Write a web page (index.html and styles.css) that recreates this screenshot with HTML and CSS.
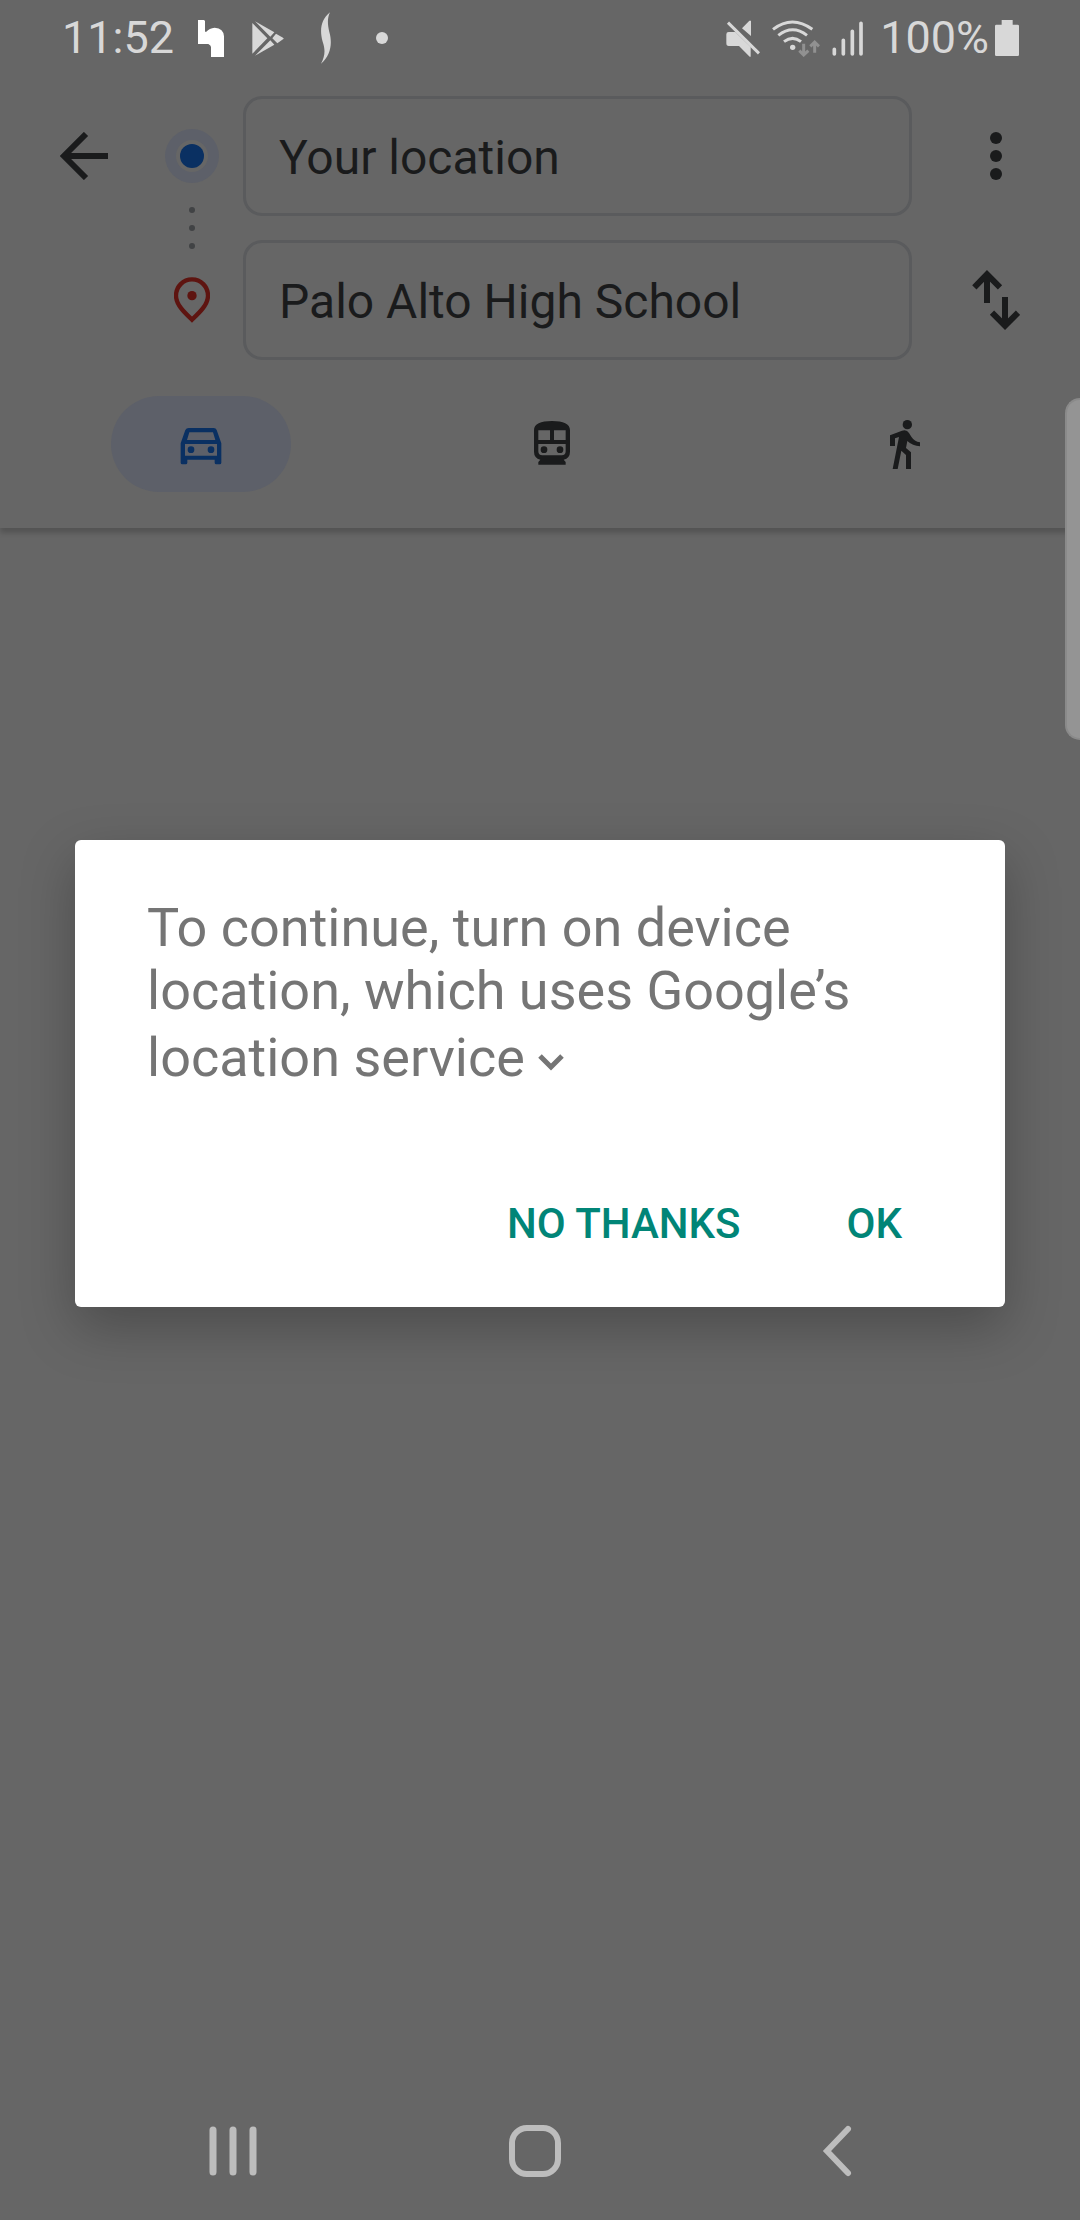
FILE: index.html
```html
<!DOCTYPE html>
<html lang="en">
<head>
<meta charset="utf-8">
<meta name="viewport" content="width=device-width, initial-scale=1">
<title>Directions</title>
<link rel="stylesheet" href="styles.css">
</head>
<body>
<div class="screen">
  <div class="status">
    <time class="status-text">11:52</time>
    <div class="notices">
      <svg width="26" height="37" viewBox="471 57 78 111" aria-hidden="true"><path fill="#fff" d="M471 57h18l3 3v32h4q9-11 25-12 27 2 28 26v62h-39v-30q0-5-8-9h-31z"/></svg>
      <svg width="32" height="35" viewBox="634 59 96 105" aria-hidden="true"><path fill="currentColor" d="M635 65l45 46-45 46zM643 60l58 33-12 13zM643 163l46-46 12 13zM706 97l21 12q4 3 0 5l-17 12-15-15z"/></svg>
      <svg class="notice-wave" width="12" height="52" viewBox="838 32 36 156" aria-hidden="true"><path fill="currentColor" d="M868 33c-9 19-7 37-2 59 10 35 4 69-25 95 13-25 13-43 5-66-10-34-5-67 22-88z"/></svg>
      <svg width="12" height="12" viewBox="0 0 12 12" aria-hidden="true"><circle cx="6" cy="6" r="6" fill="currentColor"/></svg>
    </div>
    <div class="system">
      <svg width="34" height="37" viewBox="78 55 102 111" aria-hidden="true"><path fill="currentColor" d="M86 91h20l46 45v29h-3l-32-32H86q-7 0-7-8V98q0-7 7-7zM126 80l22-23h5v46z"/><path d="M84 63l93 92" stroke="currentColor" stroke-width="9"/></svg>
      <svg width="48" height="37" viewBox="219 55 144 111" aria-hidden="true"><g fill="none" stroke="currentColor" stroke-width="9"><path d="M222 83q58-44 118 0M238 101q43-33 86 0M255 120q26-20 51 0"/></g><circle cx="281" cy="137" r="8" fill="currentColor"/><g fill="none" stroke="#919191" stroke-width="9"><path d="M314 126v34M301 147l13 13 14-13M347 153v-32M334 134l13-13 13 13"/></g></svg>
      <svg width="32" height="35" viewBox="400 61 96 105" aria-hidden="true"><path d="M407 146v14M434 119v41M461 92v68M487 68v92" stroke="currentColor" stroke-width="11" stroke-linecap="round"/></svg>
      <span class="status-text battery-level">100%</span>
      <svg width="24" height="36" viewBox="882 57 72 108" aria-hidden="true"><path fill="currentColor" d="M902 57h33v14h15q4 0 4 4v86q0 4-4 4h-64q-4 0-4-4V75q0-4 4-4h16z"/></svg>
    </div>
  </div>

  <header class="planner">
    <div class="route">
      <button class="icon-button back" aria-label="Back"><svg width="48" height="48" viewBox="0 0 48 48"><path d="M48 24H4M26 2L4 24l22 22" fill="none" stroke="currentColor" stroke-width="6"/></svg></button>
      <svg class="origin" width="54" height="54" viewBox="0 0 54 54" aria-hidden="true"><circle cx="27" cy="27" r="27" fill="#5d6069"/><circle cx="27" cy="27" r="16" fill="#666"/><circle cx="27" cy="27" r="12" fill="#0a3062"/></svg>
      <input class="place place-from" type="text" value="Your location" aria-label="Starting point">
      <button class="icon-button more" aria-label="More options"><svg width="12" height="48" viewBox="0 0 12 48" fill="currentColor"><circle cx="6" cy="6" r="6"/><circle cx="6" cy="24" r="6"/><circle cx="6" cy="42" r="6"/></svg></button>
      <svg class="between" width="6" height="42" viewBox="0 0 6 42" fill="#414345" aria-hidden="true"><circle cx="3" cy="3" r="3"/><circle cx="3" cy="21" r="3"/><circle cx="3" cy="39" r="3"/></svg>
      <svg class="pin" width="36" height="46" viewBox="402 591 108 138" aria-hidden="true"><path d="M456 719c-20-19-48-44-48-72a48 49 0 0 1 96 0c0 28-28 53-48 72z" fill="none" stroke="#5e1410" stroke-width="13"/><circle cx="456" cy="647" r="14" fill="#5e1410"/></svg>
      <input class="place place-to" type="text" value="Palo Alto High School" aria-label="Destination">
      <button class="icon-button swap" aria-label="Swap start and destination"><svg width="48" height="60" viewBox="336 570 144 180"><path d="M381 669v-87M343 622l38-39 39 39M435 651v88M396 698l39 39 39-39" fill="none" stroke="currentColor" stroke-width="18"/></svg></button>
    </div>
    <nav class="modes" aria-label="Travel mode">
      <button class="mode mode-active" aria-label="Driving" aria-pressed="true"><svg width="54" height="54" viewBox="252 111 162 162"><path fill="currentColor" fill-rule="evenodd" d="M296 144h75q7 0 9 6l14 40v58q0 5-5 5h-10q-5 0-5-5v-9h-82v9q0 5-5 5h-10q-5 0-5-5v-58l14-40q3-6 10-6zM298 157l-7 23h85l-7-23zM285 192v35h96v-35z"/><g fill="currentColor"><circle cx="303" cy="209" r="10"/><circle cx="363" cy="209" r="10"/></g></svg></button>
      <button class="mode" aria-label="Transit" aria-pressed="false"><svg width="54" height="54" viewBox="1305 111 162 162"><path fill="currentColor" fill-rule="evenodd" d="M1386 123c34 0 54 8 54 28v64q0 19-19 24l6 7v8h-82v-8l6-7q-19-5-19-24v-64c0-20 20-28 54-28zM1345 151v29h35v-29zM1392 151v29h35v-29zM1345 192v22q0 12 12 12h58q12 0 12-12v-22z"/><g fill="currentColor"><circle cx="1362" cy="209" r="10"/><circle cx="1410" cy="209" r="10"/></g></svg></button>
      <button class="mode" aria-label="Walking" aria-pressed="false"><svg width="54" height="54" viewBox="108 111 162 162"><g fill="currentColor"><circle cx="202" cy="134" r="14"/><path d="M150 166l36-14q14-5 21 7l7 11q9 14 26 17v12q-22-1-38-16l-4 21 15 13v50h-15v-42l-14-13-11 55h-15l19-96-12 4v23h-15z"/></g></svg></button>
    </nav>
  </header>

  <main class="map"></main>

  <nav class="system-nav" aria-label="System">
    <button class="nav-button" aria-label="Recent apps"><svg width="54" height="54" viewBox="0 0 54 54"><path d="M7 6v42M27 6v42M47 6v42" stroke="currentColor" stroke-width="7" stroke-linecap="round"/></svg></button>
    <button class="nav-button" aria-label="Home"><svg width="54" height="54" viewBox="0 0 54 54"><rect x="4" y="4" width="46" height="46" rx="15" fill="none" stroke="currentColor" stroke-width="6"/></svg></button>
    <button class="nav-button" aria-label="Back"><svg width="54" height="54" viewBox="0 0 54 54"><path d="M38 5L17 27l21 22" fill="none" stroke="currentColor" stroke-width="6" stroke-linecap="round"/></svg></button>
  </nav>

  <div class="edge-handle"></div>

  <div class="overlay">
    <section class="dialog" role="dialog" aria-modal="true" aria-labelledby="dialog-message">
      <p class="message" id="dialog-message">To continue, turn on device location, which uses Google’s location service <svg class="chevron" width="36" height="54" viewBox="0 0 36 54" aria-hidden="true"><path d="M7 34l11 11 11-11" fill="none" stroke="currentColor" stroke-width="5"/></svg></p>
      <div class="actions">
        <button class="action">NO THANKS</button>
        <button class="action">OK</button>
      </div>
    </section>
  </div>
</div>
</body>
</html>
```
FILE: styles.css
```css
* {
  box-sizing: border-box;
}

body {
  margin: 0;
  background: #666;
  color: #1a1b1c;
  font-family: Roboto, "Liberation Sans", sans-serif;
}

button {
  margin: 0;
  padding: 0;
  border: 0;
  background: none;
  color: inherit;
  font: inherit;
}

svg {
  display: block;
  flex: none;
}

.screen {
  position: relative;
  display: flex;
  flex-direction: column;
  min-height: 100vh;
}

/* Status bar */
.status {
  display: flex;
  align-items: center;
  height: 74px;
  padding: 2px 61px 0 62px;
  color: #d8d8d8;
}

.status-text {
  font-size: 45px;
  line-height: 54px;
}

.notices {
  display: flex;
  align-items: center;
  gap: 28px;
  padding-left: 24px;
}

.notice-wave {
  margin: 0 16px 0 8px;
}

.system {
  display: flex;
  align-items: center;
  gap: 12px;
  margin-left: auto;
}

.battery-level {
  margin: 0 -6px 0 4px;
}

/* Route planner */
.planner {
  padding: 22px 0 36px;
  box-shadow: 0 5px 5px rgba(0, 0, 0, 0.18);
}

.route {
  display: grid;
  grid-template-columns: 81px 102px 1fr 108px;
  grid-template-rows: 120px 120px;
  row-gap: 24px;
  align-items: center;
  padding: 0 60px;
}

.icon-button {
  display: flex;
  justify-content: center;
  width: 48px;
}

.back {
  grid-area: 1 / 1;
}

.origin {
  grid-area: 1 / 2;
  justify-self: center;
}

.between {
  grid-area: 1 / 2 / 3 / 3;
  justify-self: center;
}

.pin {
  grid-area: 2 / 2;
  justify-self: center;
}

.place {
  width: 100%;
  height: 120px;
  padding: 2px 33px 0;
  border: 3px solid #5a5b5d;
  border-radius: 19px;
  background: none;
  color: inherit;
  font: 48px Roboto, "Liberation Sans", sans-serif;
}

.place-from {
  grid-area: 1 / 3;
}

.place-to {
  grid-area: 2 / 3;
}

.more {
  grid-area: 1 / 4;
  justify-self: end;
}

.swap {
  grid-area: 2 / 4;
  justify-self: end;
}

.modes {
  display: flex;
  justify-content: space-between;
  margin-top: 36px;
  padding: 0 87px 0 111px;
}

.mode {
  display: flex;
  align-items: center;
  justify-content: center;
  width: 180px;
  height: 96px;
  border-radius: 48px;
}

.mode-active {
  background: #5d6069;
  color: #0a3062;
}

.map {
  flex: 1;
}

/* System navigation */
.system-nav {
  display: flex;
  align-items: center;
  justify-content: space-between;
  height: 144px;
  padding: 6px 216px 0 206px;
  color: #bdbdbd;
}

.edge-handle {
  position: absolute;
  top: 398px;
  right: 0;
  width: 15px;
  height: 342px;
  border: 2px solid #8a8a8a;
  border-right: 0;
  border-radius: 15px 0 0 15px;
  background: #949494;
}

/* Dialog */
.overlay {
  position: absolute;
  inset: 70px 0 144px;
  display: flex;
  align-items: center;
  justify-content: center;
  padding: 0 75px;
}

.dialog {
  width: 100%;
  padding: 56px 67px 35px 72px;
  border-radius: 6px;
  background: #fff;
  box-shadow: 0 20px 54px rgba(0, 0, 0, 0.26);
}

.message {
  margin: 0 0 87px;
  color: #757575;
  font-size: 54px;
  line-height: 63px;
}

.chevron {
  display: inline-block;
  margin-left: -5px;
  vertical-align: 0;
}

.actions {
  display: flex;
  justify-content: flex-end;
  gap: 34px;
}

.action {
  height: 96px;
  padding: 0 36px;
  color: #018577;
  font-size: 42px;
  font-weight: 500;
}
```
